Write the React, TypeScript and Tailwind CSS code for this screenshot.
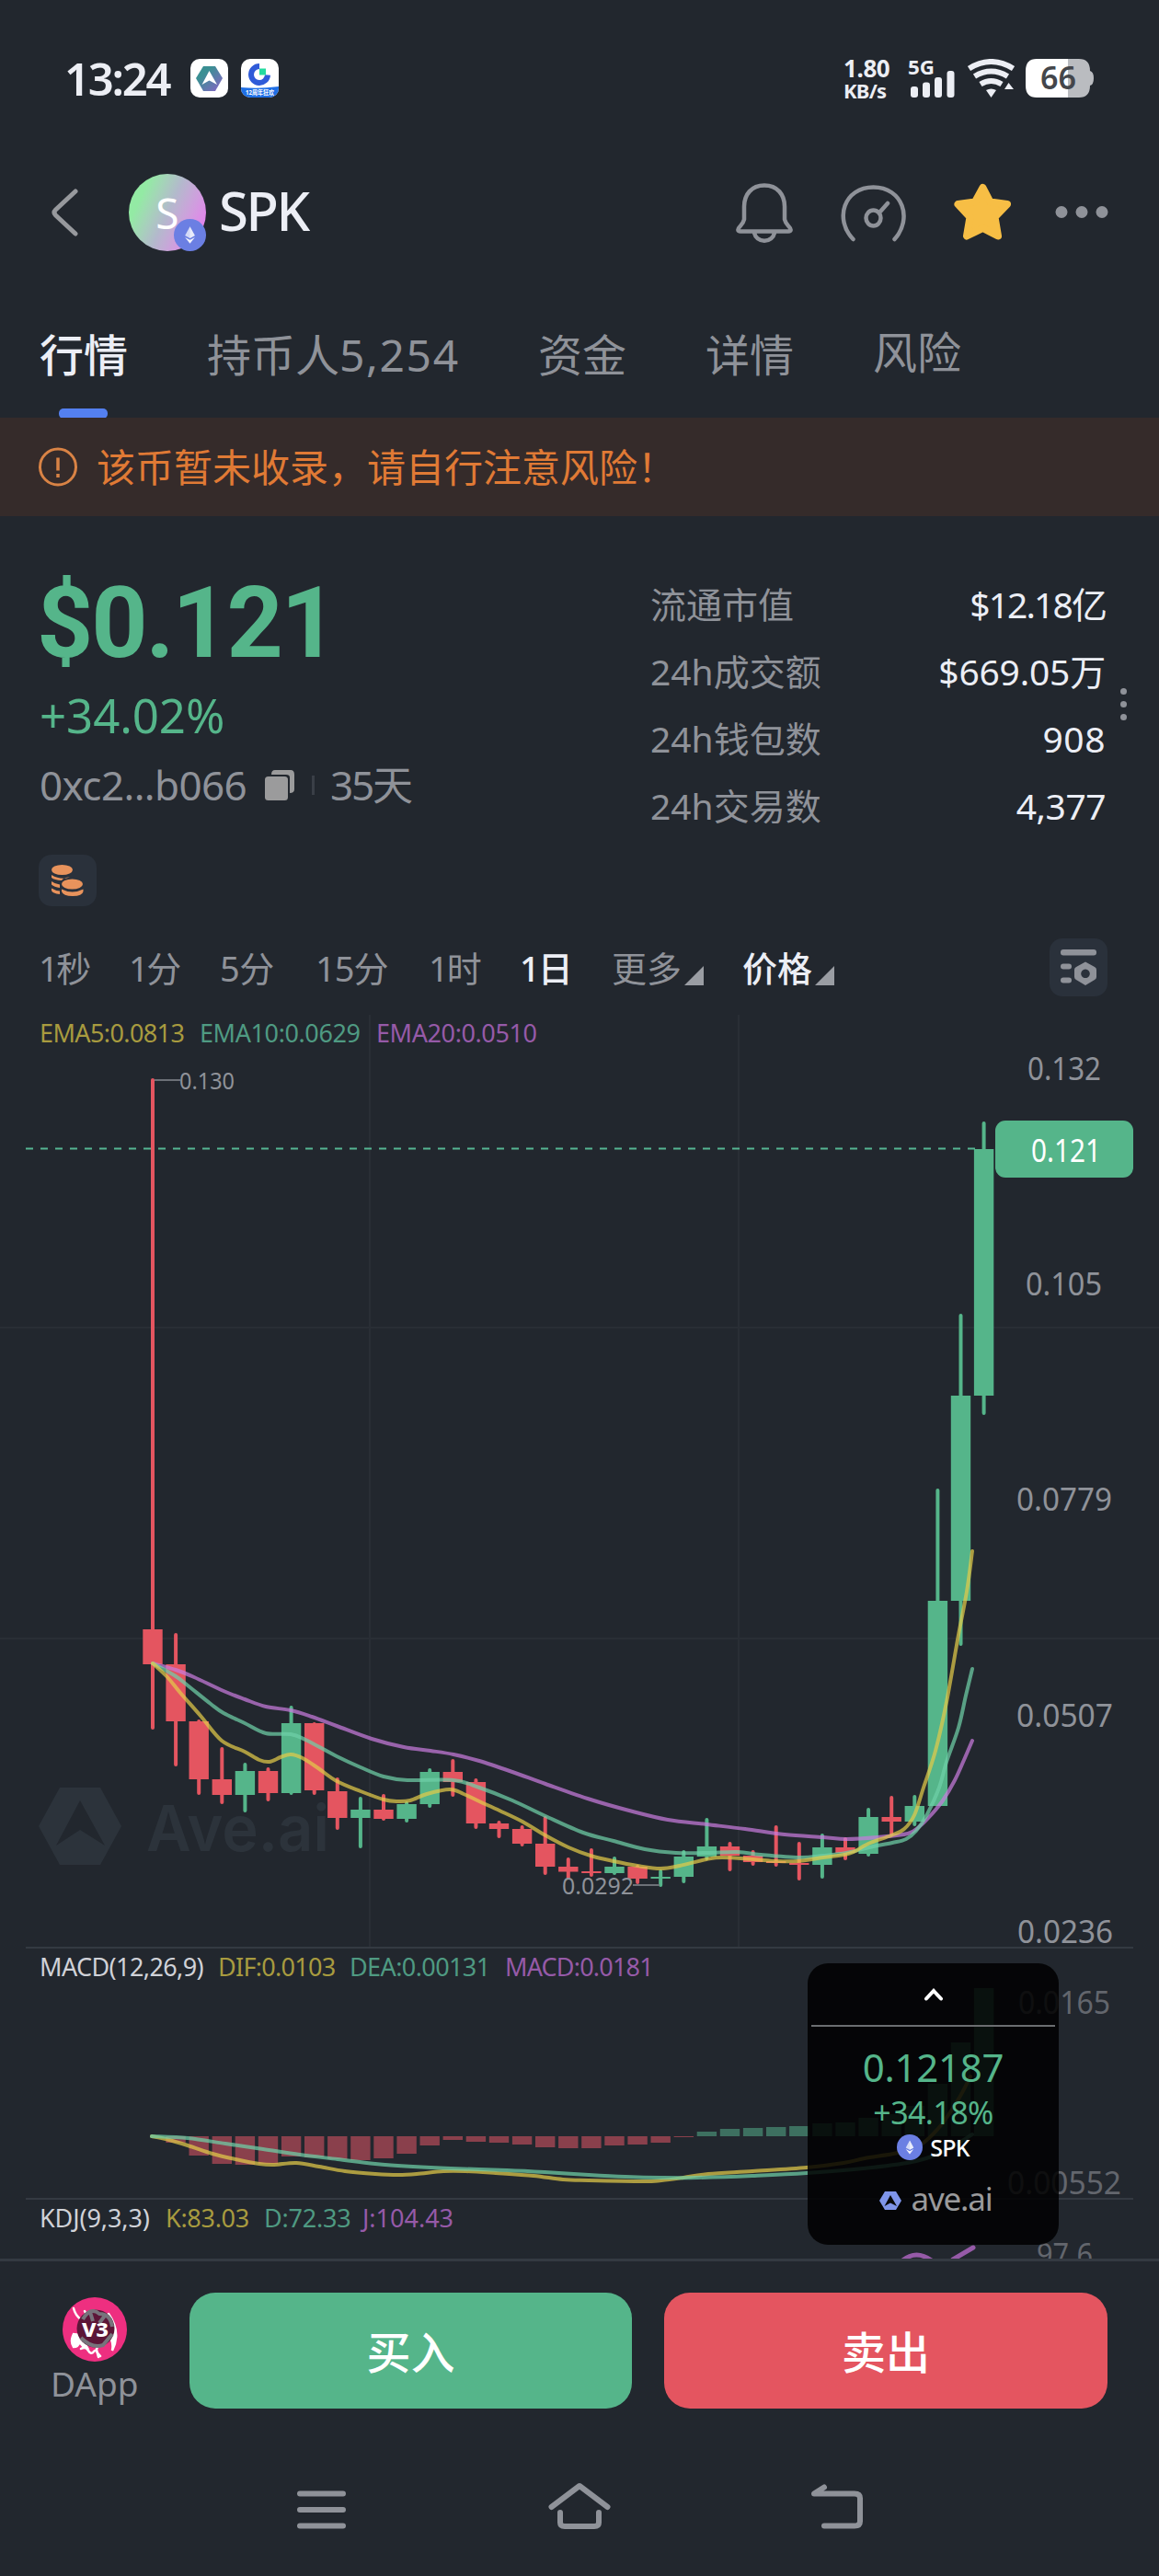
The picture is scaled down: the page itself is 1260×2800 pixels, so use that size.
import type { ReactNode } from "react";

type Point = [number, number];

// [high, body top, body bottom, low, rising]
type Candle = [number, number, number, number, 0 | 1];

const UP = "#55b58a";
const DOWN = "#e45560";
const FIRST_X = 166;
const STEP = 25.1;
const BODY = 21.4;

const candles: Candle[] = [
  [1174, 1771, 1809, 1878, 0],
  [1777, 1809, 1871, 1918, 0],
  [1871, 1871, 1934, 1949, 0],
  [1901, 1934, 1951, 1959, 0],
  [1918, 1925, 1951, 1968, 1],
  [1923, 1925, 1949, 1956, 0],
  [1856, 1873, 1949, 1949, 1],
  [1874, 1873, 1946, 1949, 0],
  [1934, 1947, 1976, 1987, 0],
  [1955, 1967, 1976, 2007, 1],
  [1952, 1967, 1977, 1977, 0],
  [1960, 1961, 1977, 1979, 1],
  [1924, 1926, 1961, 1963, 1],
  [1914, 1926, 1937, 1951, 0],
  [1935, 1937, 1982, 1986, 0],
  [1981, 1982, 1988, 1996, 0],
  [1986, 1988, 2004, 2005, 0],
  [1976, 2004, 2029, 2036, 0],
  [2021, 2029, 2034.5, 2041, 0],
  [2011, 2034, 2036, 2038, 0],
  [2020, 2029, 2036, 2036, 1],
  [2029, 2029, 2042, 2046, 0],
  [2034, 2040, 2042, 2049, 1],
  [2013, 2018, 2040, 2045, 1],
  [1978, 2007, 2018, 2020, 1],
  [2004, 2007, 2017, 2032, 0],
  [2013, 2017, 2024, 2026, 0],
  [1986, 2023, 2025, 2027, 0],
  [2004, 2025, 2027, 2042, 0],
  [1995, 2008, 2027, 2040, 1],
  [1999, 2008, 2014, 2020, 0],
  [1967, 1975, 2015, 2016, 1],
  [1954, 1975, 1980, 1994, 0],
  [1953, 1963, 1980, 1983, 1],
  [1620, 1740, 1963, 1961, 1],
  [1430, 1517, 1740, 1787, 1],
  [1221, 1249, 1517, 1536, 1],
];

const ema5: Point[] = [
  [166, 1808], [182, 1823], [196, 1840], [218, 1865], [241, 1892], [266, 1904], [282, 1913], [293, 1915],
  [305, 1910], [316, 1907], [329, 1911], [346, 1922], [366, 1936], [392, 1947], [417, 1956], [432, 1958],
  [446, 1957], [464, 1950], [489, 1945], [504, 1950], [521, 1958], [543, 1968], [568, 1980], [593, 1995],
  [618, 2008], [642, 2017], [667, 2023], [693, 2028], [718, 2031], [739, 2028], [768, 2021], [785, 2019],
  [819, 2021], [844, 2023], [867, 2023], [895, 2019], [918, 2016], [928, 2013], [944, 2004], [969, 1995],
  [983, 1988], [994, 1973], [1004, 1943], [1017, 1903], [1029, 1850], [1042, 1777], [1051, 1730], [1057, 1686],
];

const ema10: Point[] = [
  [166, 1808], [191, 1822], [204, 1832], [229, 1852], [243, 1862], [266, 1873], [289, 1884], [316, 1885],
  [332, 1891], [366, 1909], [392, 1921], [417, 1931], [443, 1935], [493, 1935], [521, 1943], [557, 1957],
  [593, 1974], [634, 1992], [667, 2001], [701, 2010], [735, 2014], [768, 2014], [802, 2013], [827, 2016],
  [869, 2019], [895, 2017], [920, 2014], [945, 2008], [970, 2003], [985, 1999], [996, 1990], [1008, 1972],
  [1021, 1943], [1029, 1915], [1042, 1878], [1050, 1843], [1057, 1814],
];

const ema20: Point[] = [
  [166, 1808], [191, 1815], [211, 1823], [243, 1838], [266, 1847], [289, 1855], [316, 1859], [339, 1866],
  [366, 1876], [404, 1890], [439, 1899], [468, 1903], [493, 1907], [521, 1914], [557, 1926], [593, 1939],
  [642, 1956], [684, 1968], [726, 1978], [768, 1983], [810, 1988], [853, 1994], [895, 1997], [920, 1999],
  [954, 1997], [987, 1993], [1000, 1985], [1012, 1973], [1025, 1957], [1038, 1935], [1048, 1913], [1057, 1892],
];

const MACD_ZERO = 2322;

// end of every histogram bar, first candle has none
const macdBars = [
  2322, 2329, 2343, 2352, 2353, 2352, 2344, 2345, 2347, 2348, 2346, 2341, 2332, 2326, 2328, 2329, 2331, 2334, 2335,
  2335, 2332, 2331, 2329, 2323, 2317, 2314, 2313, 2312, 2311, 2308, 2307, 2302, 2298, 2289, 2265, 2220, 2161,
];

const dif: Point[] = [
  [165, 2322], [180, 2325], [204, 2332], [231, 2341], [256, 2347], [282, 2352], [298, 2353], [322, 2351],
  [347, 2355], [375, 2360], [408, 2363], [433, 2364], [453, 2363], [482, 2360], [506, 2360], [539, 2362],
  [580, 2365], [612, 2369], [640, 2370], [699, 2371], [719, 2370], [743, 2367], [770, 2363], [818, 2360],
  [877, 2356], [917, 2351], [940, 2346], [976, 2340], [1000, 2332], [1023, 2310], [1043, 2280], [1055, 2257],
];

const dea: Point[] = [
  [165, 2322], [204, 2324], [245, 2330], [286, 2336], [326, 2342], [367, 2347], [408, 2352], [449, 2355],
  [490, 2357], [551, 2359], [592, 2361], [640, 2364], [680, 2366], [719, 2367], [758, 2367], [818, 2365],
  [877, 2362], [948, 2356], [996, 2349], [1027, 2338], [1057, 2320],
];

const stats = [
  { label: "流通市值", value: "$12.18亿", track: "tracking-[-1.9px]" },
  { label: "24h成交额", value: "$669.05万", track: "tracking-[-0.2px]" },
  { label: "24h钱包数", value: "908", track: "tracking-[0.5px]" },
  { label: "24h交易数", value: "4,377", track: "tracking-[-0.5px]" },
];

const smooth = (pts: Point[]) => {
  let d = `M${pts[0][0]} ${pts[0][1]}`;
  for (let i = 0; i < pts.length - 1; i++) {
    const p0 = pts[i - 1] || pts[i];
    const p1 = pts[i];
    const p2 = pts[i + 1];
    const p3 = pts[i + 2] || p2;
    d += ` C${p1[0] + (p2[0] - p0[0]) / 6} ${p1[1] + (p2[1] - p0[1]) / 6} ${p2[0] - (p3[0] - p1[0]) / 6} ${p2[1] - (p3[1] - p1[1]) / 6} ${p2[0]} ${p2[1]}`;
  }
  return d;
};

const Curve = ({ points, color }: { points: Point[]; color: string }) => (
  <path d={smooth(points)} fill="none" stroke={color} strokeWidth="4" strokeLinecap="round" strokeLinejoin="round" opacity="0.72" />
);

const Label = ({ x, y, w, size = 34, fill = "#8f9299", children }: { x: number; y: number; w: number; size?: number; fill?: string; children: ReactNode }) => (
  <text x={x} y={y} fontSize={size} fill={fill} textLength={w} lengthAdjust="spacingAndGlyphs">
    {children}
  </text>
);

const EthMark = ({ className }: { className: string }) => (
  <svg className={className} viewBox="0 0 36 36">
    <circle cx="18" cy="18" r="18" fill="#6b7fe3" />
    <path d="M18 8.500 12.500 18.500 18 21.500 23.500 18.500Z" fill="#fff" opacity="0.7" />
    <path d="M18 8.500v13l5.500-3Z" fill="#fff" opacity="0.5" />
    <path d="M12.500 20.500 18 27.500l5.500-7L18 23.500Z" fill="#fff" opacity="0.9" />
  </svg>
);

const StatusBar = () => (
  <div className="flex h-[170px] items-start justify-between pt-[64px] pl-[70px] pr-[70px] text-[#eceef4]">
    <div className="flex h-[42px] items-center">
      <span className="w-[137px] text-[49px] font-semibold leading-none tracking-[-2.300px]">13:24</span>
      <svg className="h-[42px] w-[41px]" viewBox="0 0 41 42">
        <defs>
          <linearGradient id="ave" x1="0" y1="0" x2="1" y2="1">
            <stop offset="0.3" stopColor="#3a8f93" />
            <stop offset="1" stopColor="#8b62c8" />
          </linearGradient>
        </defs>
        <rect width="41" height="42" rx="10" fill="#fff" />
        <path d="M14 8h13l8 13-8 14H14L6 21Z" fill="url(#ave)" />
        <path d="M20.500 13 29 28l-8.500-4.500L12.500 28Z" fill="#fff" />
      </svg>
      <svg className="ml-[14px] h-[42px] w-[41px]" viewBox="0 0 41 42">
        <clipPath id="gate">
          <rect width="41" height="42" rx="10" />
        </clipPath>
        <g clipPath="url(#gate)">
          <rect width="41" height="42" fill="#fff" />
          <path d="M0 31q20 2 41-1v12H0Z" fill="#1f6fe6" />
          <path d="M20 8a9 9 0 1 0 9 9.500" fill="none" stroke="#2f5bd8" strokeWidth="6" />
          <rect x="20" y="10.500" width="7" height="7" fill="#24dba0" />
        </g>
        <text x="5" y="39" fontSize="7" fontWeight="700" fill="#fff" textLength="31" lengthAdjust="spacingAndGlyphs">12周年狂欢</text>
      </svg>
    </div>
    <div className="flex h-[42px]">
      <div className="flex w-[71px] flex-col text-[26px] font-bold leading-[20px]">
        <span className="tracking-[-0.400px]">1.80</span>
        <span className="mt-[4px] text-[22px] tracking-[-0.800px]">KB/s</span>
      </div>
      <svg className="h-[42px] w-[52px] overflow-visible" viewBox="990 64 52 42" fill="#eceef4">
        <text x="989" y="81" fontSize="22" fontWeight="700" textLength="29" lengthAdjust="spacingAndGlyphs">5G</text>
        <rect x="992" y="94" width="8" height="12" rx="3" />
        <rect x="1005" y="89.500" width="8" height="16.500" rx="3" />
        <rect x="1018" y="84" width="8" height="22" rx="3" />
        <rect x="1031.500" y="77" width="8" height="29" rx="3" />
      </svg>
      <svg className="ml-[11px] h-[42px] w-[54px]" viewBox="1052 64 54 42" fill="none" stroke="#eceef4" strokeWidth="6">
        <path d="M1054.500 74.500q24-15 48 0" />
        <path d="M1060.500 83q18-11 36 0" />
        <path d="M1067 91.500q11.500-7 23 0" />
        <path d="M1073 98q5.500-3 11 0l-5.500 8ZM1093 97l4.500-7 5.500 7Z" fill="#eceef4" stroke="none" />
      </svg>
      <svg className="ml-[10px] h-[42px] w-[75px]" viewBox="1116 64 75 42">
        <path d="M1162 64h12q12 0 12 13 4 1 4 8t-4 8q0 13-12 13h-12Z" fill="#babcc0" />
        <path d="M1162 64h-34q-12 0-12 13v16q0 13 12 13h34Z" fill="#fff" />
        <text x="1132" y="97" fontSize="34" fontWeight="600" fill="#44464b" textLength="39" lengthAdjust="spacingAndGlyphs">66</text>
      </svg>
    </div>
  </div>
);

const Header = () => (
  <div className="flex h-[122px] items-center pl-[54px] pr-[54px]">
    <svg className="h-[56px] w-[32px]" viewBox="0 0 32 56" fill="none" stroke="#97999d" strokeWidth="5" strokeLinecap="round">
      <path d="M28 5 6.500 25q-3 3 0 6L28 51" />
    </svg>
    <div className="relative ml-[54px] flex h-[84px] w-[84px] items-center justify-center rounded-full bg-linear-115 from-[#93eaa4] from-20% via-[#b3b9cc] via-50% to-[#e087ea] to-85%">
      <span className="text-[46px] leading-none text-white">S</span>
      <EthMark className="absolute right-0 bottom-0 h-[35px] w-[35px]" />
    </div>
    <h1 className="mb-[5px] ml-[14px] flex-1 text-[58px] font-medium leading-none tracking-[-2.400px] text-[#eceef5]">SPK</h1>
    <svg className="h-[66px] w-[408px]" viewBox="798 198 408 66" fill="none" stroke="#8f9299" strokeWidth="4.500" strokeLinecap="round" strokeLinejoin="round">
      <path d="M831 201.500c-14 0-22 10-22 23v14q-1 4-4 7c-4 4-3 6 0 6h52c3 0 4-2 0-6q-3-3-4-7v-14c0-13-8-23-22-23ZM820 252c1 13 21 13 22 0" />
      <path d="M927.500 260c-21-22-10-56.500 22-56.500s43 34.500 23 56.500M957 230l8-9" />
      <ellipse cx="949.500" cy="237" rx="8" ry="8.500" />
      <path
        d="M1068.500 204 1076.500 219.500 1095 222 1081.500 236 1085 256.500 1068.500 248 1051 256.500 1054.500 236 1041.500 222 1060 219.500Z"
        fill="#f7be45"
        stroke="#f7be45"
        strokeWidth="8"
      />
      <g fill="#8f9299" stroke="none">
        <circle cx="1154" cy="230.500" r="6.500" />
        <circle cx="1176" cy="230.500" r="6.500" />
        <circle cx="1198" cy="230.500" r="6.500" />
      </g>
    </svg>
  </div>
);

const Tabs = () => (
  <div className="flex h-[162px] items-start pt-[62px] pl-[43px] text-[48px] leading-[64px] text-[#8f9299]">
    <div className="flex flex-col items-center font-medium text-[#eceef5]">
      <span>行情</span>
      <i className="mt-[26px] mr-[1px] h-[11px] w-[53px] rounded-[5px] bg-[#5480f0]" />
    </div>
    <span className="ml-[86px] w-[274px] whitespace-nowrap">
      持币人<span className="tracking-[1.600px]">5,254</span>
    </span>
    <span className="ml-[86px]">资金</span>
    <span className="ml-[86px]">详情</span>
    <span className="-mt-[3px] ml-[86px]">风险</span>
  </div>
);

const Warning = () => (
  <div className="flex h-[107px] items-center bg-[#352b2a] pl-[42px] text-[42px] leading-none text-[#e07a35]">
    <svg className="h-[44px] w-[44px]" viewBox="0 0 44 44" fill="none" stroke="#d98345" strokeWidth="3">
      <circle cx="21" cy="21.500" r="19.500" />
      <path d="M21 11.500v14M21 29v4" strokeWidth="3.500" />
    </svg>
    <span className="ml-[19px]">该币暂未收录，请自行注意风险！</span>
  </div>
);

const Summary = () => (
  <div className="flex h-[368px] pt-[61px] pl-[43px]">
    <div className="flex w-[664px] flex-col">
      <div className="-ml-[3px] flex h-[100px] items-center pt-[10px] font-[Roboto] text-[107px] font-bold leading-none tracking-[-2.200px] text-[#55b58a]">$0.121</div>
      <div className="flex h-[110px] items-center text-[51px] leading-none tracking-[-0.100px] text-[#55b58a]">+34.02%</div>
      <div className="flex h-[42px] items-center text-[44px] leading-none text-[#8f9299]">
        <span className="w-[245px] tracking-[-0.600px]">0xc2...b066</span>
        <svg className="h-[33px] w-[32px]" viewBox="0 0 32 33" fill="#9b9b9c">
          <path d="M7 5q0-5 4-5h17q4 0 4 5v16q0 4-5 4V8q0-3-4-3Z" />
          <rect y="7" width="25" height="26" rx="3.500" />
        </svg>
        <i className="ml-[19px] mr-[17px] h-[21px] w-[3px] bg-[#3a3f47]" />
        <span className="tracking-[-2.200px]">35天</span>
      </div>
    </div>
    <div className="-mt-[2px] w-[495px]">
      {stats.map((s) => (
        <div key={s.label} className="flex h-[73px] items-center justify-between text-[39px] leading-none">
          <span className="text-[#8f9299]">{s.label}</span>
          <span className={`${s.track} text-[#eceef5]`}>{s.value}</span>
        </div>
      ))}
    </div>
    <div className="flex w-[38px] flex-col items-center justify-start gap-[7px] pt-[126px]">
      <i className="h-[7px] w-[7px] rounded-full bg-[#8f9299]" />
      <i className="h-[7px] w-[7px] rounded-full bg-[#8f9299]" />
      <i className="h-[7px] w-[7px] rounded-full bg-[#8f9299]" />
    </div>
  </div>
);

const Corner = () => (
  <svg className="mt-[17px] ml-[3px] h-[21px] w-[21px]" viewBox="0 0 21 21">
    <path d="M21 0v21H0Z" fill="#9a9da3" />
  </svg>
);

const Toolbar = () => (
  <div className="flex flex-col pl-[42px] pr-[56px]">
    <div className="flex h-[56px] w-[63px] items-center justify-center rounded-[14px] bg-[#2a313b]">
      <svg className="h-[34px] w-[35px]" viewBox="0 0 35 34" fill="#e8935c">
        <ellipse cx="11.500" cy="5.500" rx="11.500" ry="5.500" />
        <path d="M0 11q10 6 20 2.500-7 0-9 3.500Q3 16.500 0 14ZM0 18q4 3 9 3.500V25Q3 24 0 21.500ZM0 25.500q4 2.500 9 3v3.500Q1 31 0 28Z" />
        <ellipse cx="22.500" cy="21" rx="11.500" ry="5.500" />
        <path d="M11 26.500q11.500 6 23.500 0v2.500q-1 5-11.500 5T11 29Z" />
      </svg>
    </div>
    <div className="mt-[35px] flex h-[63px] items-center text-[38px] leading-none whitespace-nowrap text-[#8f9299]">
      <span className="w-[98px] tracking-[-2.500px]">1秒</span>
      <span className="w-[99px] tracking-[-2.500px]">1分</span>
      <span className="w-[104px] tracking-[-0.500px]">5分</span>
      <span className="w-[123px] tracking-[-1px]">15分</span>
      <span className="w-[99px] tracking-[-2px]">1时</span>
      <span className="w-[100px] font-medium tracking-[-2px] text-[#eceef5]">1日</span>
      <span>更多</span>
      <Corner />
      <span className="ml-[42px] font-medium text-[#eceef5]">价格</span>
      <Corner />
      <div className="ml-auto flex h-[63px] w-[63px] items-center justify-center rounded-[14px] bg-[#2a313b]">
        <svg className="h-[40px] w-[39px]" viewBox="0 0 39 40" fill="#8f9299">
          <rect width="39" height="6.500" rx="3" />
          <rect y="15.500" width="12" height="6" rx="3" />
          <rect y="30.500" width="12" height="6" rx="3" />
          <path fillRule="evenodd" d="M27 13.500 37 19q2 1 2 3v8q0 2-2 3l-10 6-10-6q-2-1-2-3v-8q0-2 2-3ZM27 21.500a4.800 4.800 0 1 0 .01 0Z" />
        </svg>
      </div>
    </div>
  </div>
);

const Legend = ({ children }: { children: ReactNode }) => (
  <div className="flex items-center gap-[18px] pl-[43px] text-[27px] leading-none whitespace-nowrap">{children}</div>
);

const PricePane = () => (
  <div className="flex h-[1018px] flex-col">
    <Legend>
      <span className="mt-[11px] w-[156px] tracking-[-0.600px] text-[#a89b3f]">EMA5:0.0813</span>
      <span className="mt-[11px] w-[174px] tracking-[-0.400px] text-[#4f9a82]">EMA10:0.0629</span>
      <span className="mt-[11px] tracking-[-0.400px] text-[#965aa8]">EMA20:0.0510</span>
    </Legend>
    <svg className="mt-[10px] h-[970px] w-[1260px] overflow-visible" viewBox="0 1146 1260 970">
      <g stroke="#292e35" strokeWidth="2">
        <path d="M402 1103V2116M803 1103V2116M0 1443H1260M0 1781H1260" />
      </g>
      <g fill="#2c333b">
        <path fillRule="evenodd" d="M65 1943h44l23 42-23 42H65l-23-42ZM87 1957l-26 49 26-17 27 17Z" />
        <text x="159" y="2012" fontFamily="Inter" fontSize="69" fontWeight="600" textLength="199" lengthAdjust="spacingAndGlyphs">
          Ave.ai
        </text>
      </g>
      <path d="M28 1248.500H1060" stroke="#55b592" strokeWidth="2" strokeDasharray="8 8" />
      {candles.map(([high, top, bottom, low, up], i) => {
        const x = FIRST_X + STEP * i;
        const color = up ? UP : DOWN;
        return (
          <g key={i} fill={color} stroke={color}>
            <path d={`M${x} ${high}V${low}`} strokeWidth="4" strokeLinecap="round" />
            <rect x={x - BODY / 2} y={top} width={BODY} height={bottom - top} stroke="none" />
          </g>
        );
      })}
      <Curve points={ema20} color="#c77bdd" />
      <Curve points={ema10} color="#6fd0a8" />
      <Curve points={ema5} color="#e2cb4a" />
      <path d="M168 1174H196M688 2049H717" stroke="#6c7077" strokeWidth="2" />
      <Label x={195} y={1184} w={60} size={25}>0.130</Label>
      <Label x={611} y={2059} w={78} size={25}>0.0292</Label>
      <Label x={1117} y={1174} w={80}>0.132</Label>
      <Label x={1115} y={1408} w={83}>0.105</Label>
      <Label x={1105} y={1642} w={104}>0.0779</Label>
      <Label x={1105} y={1877} w={105}>0.0507</Label>
      <Label x={1106} y={2112} w={104}>0.0236</Label>
      <rect x="1082" y="1218" width="150" height="62" rx="11" fill={UP} />
      <Label x={1121} y={1263} w={76} fill="#fff">0.121</Label>
    </svg>
  </div>
);

const MacdPane = () => (
  <div className="mx-[28px] flex h-[273px] flex-col border-t-2 border-[#343a42]">
    <div className="-ml-[28px] flex h-[42px] items-center pb-[4px]">
      <Legend>
        <span className="w-[176px] tracking-[-0.600px] text-[#d0d2d8]">MACD(12,26,9)</span>
        <span className="w-[125px] tracking-[-0.700px] text-[#a89b3f]">DIF:0.0103</span>
        <span className="w-[151px] tracking-[-0.600px] text-[#4f9a82]">DEA:0.00131</span>
        <span className="tracking-[-0.800px] text-[#965aa8]">MACD:0.0181</span>
      </Legend>
    </div>
    <svg className="-ml-[28px] h-[229px] w-[1260px] overflow-visible" viewBox="0 2160 1260 229">
      {macdBars.map((end, i) => (
        <rect
          key={i}
          x={FIRST_X + STEP * i - BODY / 2}
          y={Math.min(end, MACD_ZERO)}
          width={BODY}
          height={Math.abs(end - MACD_ZERO)}
          fill={end > MACD_ZERO ? "#8a404c" : "#3d7060"}
        />
      ))}
      <Curve points={dif} color="#e2cb4a" />
      <Curve points={dea} color="#6fd0a8" />
      <Label x={1107} y={2189} w={100} fill="#63666d">0.0165</Label>
      <Label x={1095} y={2385} w={124} fill="#63666d">0.00552</Label>
    </svg>
  </div>
);

const KdjPane = () => (
  <div className="mx-[28px] flex h-[66px] flex-col border-t-2 border-[#343a42]">
    <div className="-ml-[28px] flex h-[42px] items-center pb-[4px]">
      <Legend>
        <span className="w-[119px] tracking-[-0.100px] text-[#d0d2d8]">KDJ(9,3,3)</span>
        <span className="w-[89px] tracking-[-0.300px] text-[#a89b3f]">K:83.03</span>
        <span className="w-[89px] tracking-[-0.200px] text-[#4f9a82]">D:72.33</span>
        <span className="text-[#965aa8]">J:104.43</span>
      </Legend>
    </div>
    <svg className="-ml-[28px] h-[22px] w-[1260px]" viewBox="0 2433 1260 22">
      <path d="M980 2458q16-14 34 0M1036 2456l22-13" fill="none" stroke="#965aa8" strokeWidth="5" strokeLinecap="round" />
      <Label x={1127} y={2463} w={61} fill="#63666d">97.6</Label>
    </svg>
  </div>
);

const FloatingTicker = () => (
  <div className="absolute top-[1036px] left-[878px] flex h-[306px] w-[273px] flex-col items-center rounded-[22px] bg-black/85 leading-none text-[#55b58a]">
    <svg className="mt-[27px] h-[14px] w-[22px]" viewBox="0 0 22 14" fill="none" stroke="#fff" strokeWidth="4" strokeLinecap="round">
      <path d="M3 11.500 11 3l8 8.500" />
    </svg>
    <i className="mt-[26px] h-[2px] w-[265px] bg-[#6b6d70]" />
    <span className="mt-[23px] text-[42px] tracking-[-0.300px]">0.12187</span>
    <span className="mt-[11px] text-[34px] tracking-[-0.600px]">+34.18%</span>
    <div className="mt-[7px] flex items-center gap-[8px]">
      <EthMark className="h-[28px] w-[28px]" />
      <span className="text-[25px] font-medium tracking-[-0.800px] text-white">SPK</span>
    </div>
    <div className="mt-[24px] flex items-center gap-[10px] pl-[6px]">
      <svg className="mt-[4px] h-[20px] w-[24px]" viewBox="0 0 24 20">
        <path d="M6 0h12l6 10-6 10H6L0 10Z" fill="#7f95ea" />
        <path d="M12 4 19 16l-7-3.500L5.500 16Z" fill="#08090b" />
      </svg>
      <span className="text-[35px] tracking-[-1.200px] text-[#9a9a9b]">ave.ai</span>
    </div>
  </div>
);

const TradeBar = () => (
  <div className="flex h-[166px] border-t-3 border-[#343a42] pt-[34px] pl-[54px]">
    <div className="flex w-[120px] flex-col items-start">
      <svg className="mt-[5px] ml-[14px] h-[70px] w-[70px]" viewBox="0 0 70 70">
        <circle cx="35" cy="35" r="35" fill="#ee2f80" />
        <g fill="none" stroke="#fff" strokeWidth="2.500" strokeLinecap="round">
          <path d="M12 12q2 8 8 12M24 15l4 8M20 56q5-3 8 2t6 1 5 6M38 54q-3 5 3 10" />
          <path d="M12 40q-4 8 0 14 5 0 7-6 2 6 8 7l-8-14Z" fill="#fff" />
          <path d="M50 18q14 20 4 40 2-10-4-16" fill="#fff" />
        </g>
        <circle cx="36" cy="34" r="20.500" fill="#5c1638" />
        <path d="M22 24q8-14 18-6 12 0 14 14M20 44q12 12 24 8l10-12M30 16l3 10M46 20l-6 8" fill="none" stroke="#77747c" strokeWidth="4" />
        <text x="21" y="43" fontSize="22" fontWeight="800" fill="#fff" textLength="29" lengthAdjust="spacingAndGlyphs">V3</text>
      </svg>
      <span className="mt-[2px] ml-[1px] text-[37px] leading-[44px] text-[#8f9299]">DApp</span>
    </div>
    <button className="ml-[32px] h-[126px] w-[481px] rounded-[28px] bg-[#55b58a] pt-[3px] text-[48px] font-medium leading-none text-white">买入</button>
    <button className="ml-[35px] h-[126px] w-[482px] rounded-[28px] bg-[#e45560] pt-[3px] text-[48px] font-medium leading-none text-white">卖出</button>
  </div>
);

const SystemNav = () => (
  <svg className="mt-[72px] h-[70px] w-[1260px]" viewBox="0 2692 1260 70" fill="none" stroke="#8f9299" strokeWidth="6" strokeLinecap="round" strokeLinejoin="round">
    <path d="M326 2709.500H373M326 2727H373M326 2744.500H373" />
    <path d="M599.500 2724 630 2701l30.500 23M609 2730v11q0 4 5 4h32q5 0 5-4v-11" />
    <path d="M896 2744.500h33q6 0 6-5v-25q0-5-6-5H885l11-7" />
  </svg>
);

export default function App() {
  return (
    <div className="flex h-[2800px] w-[1260px] flex-col overflow-hidden bg-[#22272e] font-['Noto_Sans','Noto_Sans_CJK_SC',sans-serif]">
      <StatusBar />
      <Header />
      <Tabs />
      <Warning />
      <Summary />
      <Toolbar />
      <div className="relative mt-[15px] flex flex-col">
        <PricePane />
        <MacdPane />
        <KdjPane />
        <FloatingTicker />
      </div>
      <TradeBar />
      <SystemNav />
    </div>
  );
}
